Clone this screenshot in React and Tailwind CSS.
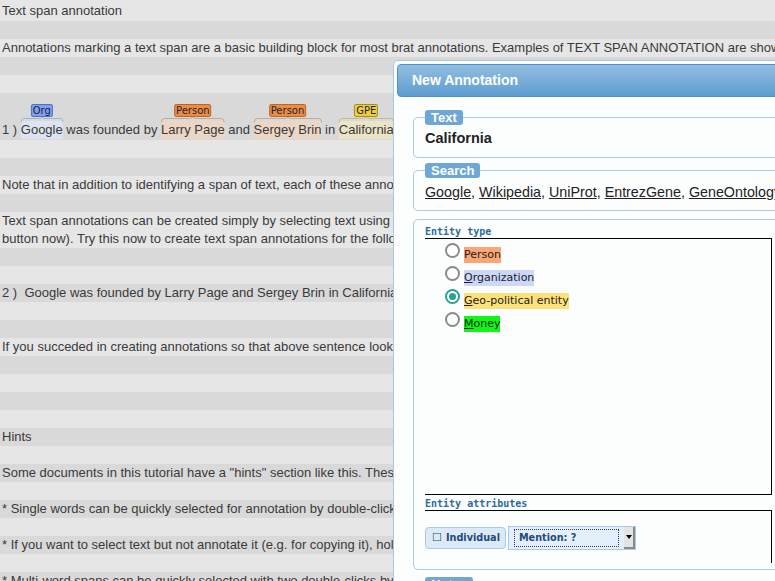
import React from "react";

const rows = [
  { text: "Text span annotation", h: "h-[21px] leading-[21px]" },
  {},
  { text: "Annotations marking a text span are a basic building block for most brat annotations. Examples of TEXT SPAN ANNOTATION are shown below." },
  {},
  {},
  { annotated: true },
  {},
  {},
  { text: "Note that in addition to identifying a span of text, each of these annotations also assigns a type to the marked span." },
  {},
  {
    lines: [
      "Text span annotations can be created simply by selecting text using the mouse (left-click and drag over the text, then release the mouse",
      "button now). Try this now to create text span annotations for the following sentence:",
    ],
  },
  {},
  {},
  { text: "2 )  Google was founded by Larry Page and Sergey Brin in California." },
  {},
  {},
  { text: "If you succeded in creating annotations so that above sentence looks like the first example, you have completed this part." },
  {},
  {},
  {},
  {},
  { text: "Hints" },
  {},
  { text: 'Some documents in this tutorial have a "hints" section like this. These give tips on using the tool.' },
  {},
  { text: "* Single words can be quickly selected for annotation by double-clicking on them." },
  {},
  { text: "* If you want to select text but not annotate it (e.g. for copying it), hold down the control key while selecting." },
  {},
  { text: "* Multi-word spans can be quickly selected with two double-clicks by first double-clicking the first word." },
];

const spanStyles = {
  Org: { bg: "bg-[#dde4f0]", label: "bg-[#7f9ff2] border-[#4d6fcf]", brace: "#a3b4d8" },
  Person: { bg: "bg-[#ecd6c5]", label: "bg-[#ec8b42] border-[#b9662a]", brace: "#c2aa94" },
  GPE: { bg: "bg-[#ebe4c6]", label: "bg-[#efcf3c] border-[#a58d1c]", brace: "#c6b98a" },
};

function Span({ type, children }) {
  const s = spanStyles[type];
  return (
    <span className={`relative inline-block ${s.bg}`}>
      {children}
      <svg
        className="absolute left-0 top-[-5px] w-full h-[7px] overflow-visible"
        viewBox="0 0 100 7"
        preserveAspectRatio="none"
      >
        <path
          d="M0.5 6.5 Q0.5 2.5 6 2.5 L45 2.5 Q50 2.5 50 0 Q50 2.5 55 2.5 L94 2.5 Q99.5 2.5 99.5 6.5"
          fill="none"
          stroke={s.brace}
          strokeWidth="1"
          vectorEffect="non-scaling-stroke"
        />
      </svg>
      <span
        className={`absolute left-1/2 -translate-x-1/2 bottom-[22px] h-[13px] px-[1px] border rounded-[2px] text-[10px] leading-[11px] text-[#1f2430] font-['DejaVu_Sans',sans-serif] ${s.label}`}
      >
        {type}
      </span>
    </span>
  );
}

function AnnotatedRow() {
  return (
    <div className="h-[47px] pt-[28px] leading-[18px] whitespace-pre">
      1 ) <Span type="Org">Google</Span> was founded by <Span type="Person">Larry Page</Span> and{" "}
      <Span type="Person">Sergey Brin</Span> in <Span type="GPE">California</Span>.
    </div>
  );
}

function Legend({ children }) {
  return (
    <span className="absolute left-[11px] top-[-8px] h-[15px] px-[6px] rounded-[3px] bg-[#6ea6d6] text-white font-bold text-[13px] leading-[15px]">
      {children}
    </span>
  );
}

const entityTypes = [
  { label: "Person", key: "", bg: "bg-[#fba674]" },
  { label: "Organization", key: "O", bg: "bg-[#cbd8fc]" },
  { label: "Geo-political entity", key: "G", bg: "bg-[#fde179]", checked: true },
  { label: "Money", key: "M", bg: "bg-[#0ff715]" },
];

function Radio({ checked }) {
  return (
    <span
      className={`w-[15px] h-[15px] rounded-full border-2 bg-white flex items-center justify-center shrink-0 ${
        checked ? "border-[#26a391]" : "border-[#8a8a8a]"
      }`}
    >
      {checked && <span className="w-[7px] h-[7px] rounded-full bg-[#26a391]" />}
    </span>
  );
}

function Dialog() {
  const links = ["Google", "Wikipedia", "UniProt", "EntrezGene", "GeneOntology", "ALC"];
  return (
    <div className="absolute left-[393px] top-[60px] w-[420px] h-[560px] border border-[#a6c9e2] rounded-[5px] bg-[#fcfdfd] p-[3px] font-['Liberation_Sans',Arial,sans-serif]">
      <div className="h-[33px] rounded-[4px] border border-[#4f90cb] bg-gradient-to-b from-[#92bee0] to-[#5e9cd0] flex items-center pl-[14px] text-white font-bold text-[14px]">
        New Annotation
      </div>
      <div className="pl-[16px] pt-[20px]">
        <div className="relative h-[41px] border border-[#a9cbe7] rounded-[5px] pl-[11px] flex items-center pt-[3px]">
          <Legend>Text</Legend>
          <span className="font-bold text-[14.5px] text-[#222]">California</span>
        </div>
        <div className="relative mt-[12px] h-[41px] border border-[#a9cbe7] rounded-[5px] pl-[11px] pt-[12px] whitespace-nowrap text-[14.3px] leading-[18px] text-[#222]">
          <Legend>Search</Legend>
          <span>
            {links.map((l, i) => (
              <React.Fragment key={l}>
                <span className="underline">{l}</span>
                {i < links.length - 1 ? ", " : ""}
              </React.Fragment>
            ))}
          </span>
        </div>
        <div className="mt-[8px] h-[351px] border border-[#a9cbe7] rounded-[5px] pl-[11px] pt-[6px] font-['DejaVu_Sans',sans-serif]">
          <div className="font-['DejaVu_Sans_Mono',monospace] font-bold text-[10px] leading-[12px] text-[#2f6a9f]">
            Entity type
          </div>
          <div className="w-[347px] h-[257px] border-t border-r border-b border-black pl-[20px] pt-[4px]">
            {entityTypes.map((e) => (
              <div key={e.label} className="h-[23px] flex items-start gap-[4px]">
                <Radio checked={e.checked} />
                <span className={`mt-[4px] h-[16px] leading-[16px] text-[11px] text-[#222] ${e.bg}`}>
                  {e.key ? (
                    <>
                      <span className="underline">{e.key}</span>
                      {e.label.slice(1)}
                    </>
                  ) : (
                    e.label
                  )}
                </span>
              </div>
            ))}
          </div>
          <div className="mt-[3px] font-['DejaVu_Sans_Mono',monospace] font-bold text-[10px] leading-[12px] text-[#2f6a9f]">
            Entity attributes
          </div>
          <div className="w-[347px] h-[53px] border-t border-r border-black pt-[15px] flex items-start gap-[2px]">
            <span className="mt-[1px] h-[22px] pl-[6px] pr-[5px] rounded-[4px] border border-[#a9cbe7] bg-[#dceaf8] flex items-center gap-[4px] text-[9.7px] font-bold text-[#234a78]">
              <span className="text-[11px] font-normal">☐</span>Individual
            </span>
            <span className="h-[24px] w-[128px] border border-[#aacbe8] bg-[#e3f0fc] flex items-center pl-[5px]">
              <span className="h-[18px] w-[106px] border border-dotted border-[#1d3f6e] flex items-center pl-[4px] text-[9.7px] font-bold text-[#234a78]">
                Mention: ?
              </span>
              <span className="ml-[5px] h-[22px] w-[11px] bg-[#e4e4e4] border-r-2 border-b-2 border-[#8a8a8a] flex items-center justify-center">
                <span className="w-0 h-0 border-l-[3px] border-r-[3px] border-t-[4px] border-l-transparent border-r-transparent border-t-black" />
              </span>
            </span>
          </div>
        </div>
        <div className="relative mt-[14px] h-[30px] border border-[#a9cbe7] rounded-[5px]">
          <Legend>Notes</Legend>
        </div>
      </div>
    </div>
  );
}

export default function App() {
  return (
    <div className="relative w-[775px] h-[581px] overflow-hidden bg-[#e6e6e6] text-[13px] text-[#3a3a3a] font-['Liberation_Sans',Arial,sans-serif]">
      {rows.map((r, i) => (
        <div
          key={i}
          className={`px-[2px] whitespace-pre ${i % 2 === 0 ? "bg-[#e6e6e6]" : "bg-[#d9d9d9]"}`}
        >
          {r.annotated ? (
            <AnnotatedRow />
          ) : r.lines ? (
            r.lines.map((l) => (
              <div key={l} className="h-[18px] leading-[18px]">
                {l}
              </div>
            ))
          ) : (
            <div className={r.h || "h-[18px] leading-[18px]"}>{r.text}</div>
          )}
        </div>
      ))}
      <Dialog />
    </div>
  );
}
